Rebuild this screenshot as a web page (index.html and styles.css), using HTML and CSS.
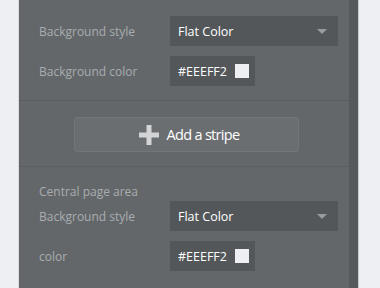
FILE: index.html
```html
<!DOCTYPE html>
<html lang="en">
<head>
  <meta charset="UTF-8" />
  <title>Page settings</title>
  <link rel="stylesheet" href="styles.css">
</head>
<body>

  <div class="panel">
    <div class="section">
      <div class="row">
        <span class="label">Background style</span>
        <div class="select">
          <span>Flat Color</span>
          <span class="caret"></span>
        </div>
      </div>
      <div class="row">
        <span class="label">Background color</span>
        <div class="color-input">
          <span>#EEEFF2</span>
          <span class="swatch"></span>
        </div>
      </div>
    </div>

    <div class="section button-section">
      <button class="add-btn">
        <svg width="20" height="20" viewBox="0 0 20 20">
          <rect x="7.5" y="0" width="5" height="20" fill="#d3d4d5" />
          <rect x="0" y="7.5" width="20" height="5" fill="#d3d4d5" />
        </svg>
        Add a stripe
      </button>
    </div>

    <div class="section last">
      <div class="heading">Central page area</div>
      <div class="row">
        <span class="label">Background style</span>
        <div class="select">
          <span>Flat Color</span>
          <span class="caret"></span>
        </div>
      </div>
      <div class="row">
        <span class="label">color</span>
        <div class="color-input">
          <span>#EEEFF2</span>
          <span class="swatch"></span>
        </div>
      </div>
    </div>
  </div>
  <div class="panel-edge"></div>

</body>
</html>
```

FILE: styles.css
```css
* {
  box-sizing: border-box;
  margin: 0;
  padding: 0;
}

body {
  font-family: 'Open Sans', sans-serif;
  background-color: #eeeff2;
  display: flex;
  height: 288px;
  overflow: hidden;
}

.panel {
  margin-left: 18px;
  width: 331px;
  background-color: #63676a;
  border-left: 1px solid #d8d9dc;
  display: flex;
  flex-direction: column;
}

.panel-edge {
  width: 10px;
  background-color: #55595c;
  border-right: 1px solid #c9cacd;
}

.section {
  padding: 16px 0 14px 20px;
  border-bottom: 1px solid #5a5e61;
  display: flex;
  flex-direction: column;
  gap: 10px;
}

.section.last {
  padding-top: 18px;
  border-bottom: none;
  gap: 10px;
}

.row {
  display: flex;
  align-items: center;
  height: 30px;
}

.label {
  width: 131px;
  font-size: 12px;
  color: #a9adb0;
}

.heading {
  font-size: 12px;
  color: #a9adb0;
  line-height: 14px;
  margin-bottom: -8px;
}

.select {
  width: 168px;
  height: 30px;
  background-color: #53575a;
  display: flex;
  align-items: center;
  justify-content: space-between;
  padding: 0 11px 0 8px;
  font-size: 12.5px;
  color: #ffffff;
}

.caret {
  width: 0;
  height: 0;
  border-left: 5px solid transparent;
  border-right: 5px solid transparent;
  border-top: 5px solid #989c9f;
}

.color-input {
  width: 85px;
  height: 30px;
  background-color: #53575a;
  display: flex;
  align-items: center;
  justify-content: space-between;
  padding: 0 6px 0 8px;
  font-size: 12.5px;
  color: #ffffff;
}

.swatch {
  width: 14px;
  height: 14px;
  background-color: #eeeff2;
}

.button-section {
  padding: 16px 0 14px 4px;
  align-items: center;
}

.add-btn {
  width: 225px;
  height: 35px;
  padding-left: 6px;
  background-color: #6a6e71;
  border: 1px solid #72767a;
  border-radius: 3px;
  font-family: 'Open Sans', sans-serif;
  font-size: 14.5px;
  letter-spacing: -0.7px;
  color: #ffffff;
  display: flex;
  align-items: center;
  justify-content: center;
  gap: 8px;
}
```
